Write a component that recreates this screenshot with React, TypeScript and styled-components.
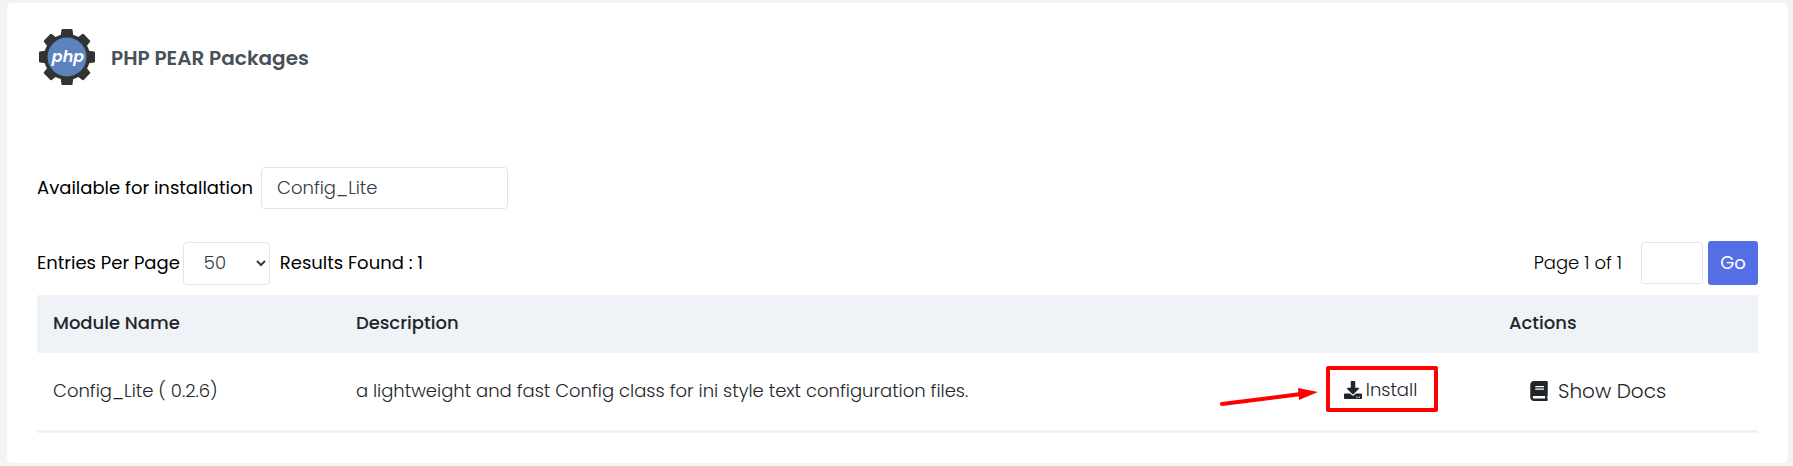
import React from "react";
import styled, { createGlobalStyle } from "styled-components";
import { FaBook, FaDownload } from "react-icons/fa";

const GlobalStyle = createGlobalStyle`
  *, *::before, *::after { box-sizing: border-box; }
  body {
    margin: 0;
    padding: 3px 5px 3px 7px;
    background: #f3f2f7;
    color: #000;
    font-family: Poppins, Inter, "Open Sans", sans-serif;
    font-size: 18px;
    line-height: 26px;
  }
  button, input, select { font: inherit; }
`;

const Card = styled.main`
  padding: 24px 30px 30px;
  border-radius: 5px;
  background: #fff;
`;

const Header = styled.header`
  display: flex;
  align-items: center;
  gap: 14px;
  margin-bottom: 80px;
`;

const Logo = styled.svg`
  width: 60px;
  height: 60px;
`;

const Title = styled.h1`
  margin: 0;
  padding-top: 2px;
  color: #495057;
  font-size: 20px;
  font-weight: 600;
`;

const SearchRow = styled.div`
  display: flex;
  align-items: center;
  gap: 8px;
  margin-bottom: 32px;
`;

const Label = styled.label`
  font-weight: 400;
`;

const TextBox = styled.input<{ $width: number }>`
  width: ${(p) => p.$width}px;
  height: 42px;
  padding: 0 15px 2px;
  border: 1px solid #e2e3e5;
  border-radius: 4px;
  background: #fff;
  color: #343a40;
  font-weight: 300;
`;

const Toolbar = styled.div`
  display: flex;
  align-items: center;
  justify-content: space-between;
  margin-bottom: 10px;
`;

const ToolGroup = styled.div<{ $gap: number }>`
  display: flex;
  align-items: center;
  gap: ${(p) => p.$gap}px;
`;

const PageSize = styled.select`
  width: 87px;
  height: 43px;
  padding: 0 0 2px 16px;
  border: 1px solid #e2e3e5;
  border-radius: 4px;
  background: #fff;
  color: #343a40;
  font-weight: 300;
`;

const ResultCount = styled.span`
  margin-left: 7px;
  font-weight: 400;
`;

const PageInfo = styled.label`
  margin-right: 14px;
  font-weight: 300;
`;

const GoButton = styled.button`
  width: 50px;
  height: 44px;
  padding: 0;
  border: 0;
  border-radius: 3px;
  background: #556ee6;
  color: #fff;
  font-weight: 400;
`;

const Table = styled.table`
  width: 100%;
  table-layout: fixed;
  border-collapse: collapse;
  color: #212529;
  text-align: left;
`;

const Column = styled.col<{ $width?: string }>`
  width: ${(p) => p.$width ?? "auto"};
`;

const HeadCell = styled.th`
  height: 58px;
  padding: 0 16px 2px;
  background: #eff2f7;
  font-weight: 500;
`;

const Cell = styled.td`
  height: 78px;
  padding: 0 16px;
  border-bottom: 3px solid #eff2f7;
  font-weight: 300;
`;

const ActionButton = styled.button<{ $large?: boolean }>`
  position: relative;
  display: inline-flex;
  align-items: center;
  gap: ${(p) => (p.$large ? 10 : 4)}px;
  margin-left: ${(p) => (p.$large ? 21 : 0)}px;
  padding: ${(p) => (p.$large ? 4 : 0)}px 0 0;
  border: 0;
  background: none;
  color: #212529;
  font-size: ${(p) => (p.$large ? 20 : 18)}px;
  font-weight: 300;
  white-space: nowrap;

  > svg:first-child {
    flex: none;
    width: 18px;
    height: ${(p) => (p.$large ? 20 : 18)}px;
  }
`;

const Highlight = styled.span`
  position: absolute;
  top: -11px;
  right: -21px;
  bottom: -9px;
  left: -18px;
  border: 4px solid #fe0000;
  border-radius: 2px;
`;

const Arrow = styled.svg`
  position: absolute;
  top: 10px;
  left: -125px;
  width: 102px;
  height: 24px;
`;

const PhpGear = () => (
  <Logo viewBox="0 0 60 60" role="img" aria-label="PHP">
    <g fill="#333" stroke="#333" strokeWidth="2" strokeLinejoin="round">
      <circle cx="30" cy="30" r="22" />
      {[0, 45, 90, 135, 180, 225, 270, 315].map((angle) => (
        <path key={angle} d="M25.500 3H34.500L35.500 10H24.500Z" transform={`rotate(${angle} 30 30)`} />
      ))}
    </g>
    <circle cx="30" cy="30" r="19.500" fill="#5d83bf" />
    <text
      x="31"
      y="35"
      textAnchor="middle"
      fill="#fff"
      fontFamily="Poppins, Inter, sans-serif"
      fontSize="16"
      fontWeight="600"
      fontStyle="italic"
    >
      php
    </text>
  </Logo>
);

export default function App() {
  return (
    <>
      <GlobalStyle />
      <Card>
        <Header>
          <PhpGear />
          <Title>PHP PEAR Packages</Title>
        </Header>

        <SearchRow>
          <Label htmlFor="package">Available for installation</Label>
          <TextBox id="package" $width={247} defaultValue="Config_Lite" />
        </SearchRow>

        <Toolbar>
          <ToolGroup $gap={3}>
            <Label htmlFor="entries">Entries Per Page</Label>
            <PageSize id="entries" defaultValue="50">
              <option>50</option>
              <option>100</option>
            </PageSize>
            <ResultCount>Results Found : 1</ResultCount>
          </ToolGroup>
          <ToolGroup $gap={5}>
            <PageInfo htmlFor="page">Page 1 of 1</PageInfo>
            <TextBox id="page" $width={62} />
            <GoButton type="button">Go</GoButton>
          </ToolGroup>
        </Toolbar>

        <Table>
          <colgroup>
            <Column $width="17.6%" />
            <Column />
            <Column $width="9.6%" />
            <Column $width="15.4%" />
          </colgroup>
          <thead>
            <tr>
              <HeadCell>Module Name</HeadCell>
              <HeadCell colSpan={2}>Description</HeadCell>
              <HeadCell>Actions</HeadCell>
            </tr>
          </thead>
          <tbody>
            <tr>
              <Cell>Config_Lite ( 0.2.6)</Cell>
              <Cell>a lightweight and fast Config class for ini style text configuration files.</Cell>
              <Cell>
                <ActionButton type="button">
                  <FaDownload />
                  Install
                  <Highlight />
                  <Arrow viewBox="0 0 102 24" aria-hidden="true">
                    <path d="M3 17L82 7" stroke="#fe0000" strokeWidth="4" strokeLinecap="round" />
                    <path d="M79 1L99 5L80 13Z" fill="#fe0000" />
                  </Arrow>
                </ActionButton>
              </Cell>
              <Cell>
                <ActionButton type="button" $large>
                  <FaBook />
                  Show Docs
                </ActionButton>
              </Cell>
            </tr>
          </tbody>
        </Table>
      </Card>
    </>
  );
}
